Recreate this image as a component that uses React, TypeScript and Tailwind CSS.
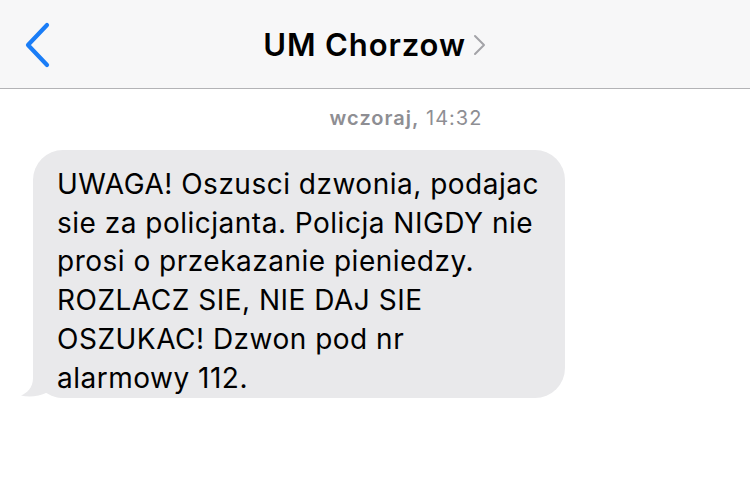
import React from "react";

export default function App() {
  const lines = [
    "UWAGA! Oszusci dzwonia, podajac",
    "sie za policjanta. Policja NIGDY nie",
    "prosi o przekazanie pieniedzy.",
    "ROZLACZ SIE, NIE DAJ SIE",
    "OSZUKAC! Dzwon pod nr",
    "alarmowy 112.",
  ];
  return (
    <div
      className="w-[750px] h-[490px] bg-white overflow-hidden"
      style={{ fontFamily: 'Inter, "Liberation Sans", Arial, sans-serif' }}
    >
      <div className="relative h-[89px] bg-[#f7f7f8] border-b border-[#b3b3b6] flex items-center justify-center">
        <svg
          className="absolute left-[22px] top-[22px]"
          width="32"
          height="46"
          viewBox="0 0 32 46"
        >
          <path
            d="M25 3 L6 23 L25 43"
            fill="none"
            stroke="#1a7df7"
            strokeWidth="4.2"
            strokeLinecap="round"
            strokeLinejoin="round"
          />
        </svg>
        <div className="flex items-center">
          <span className="text-[31px] font-semibold text-black tracking-[0.9px] leading-none">
            UM Chorzow
          </span>
          <svg className="ml-[7px] mt-[2px]" width="14" height="22" viewBox="0 0 14 22">
            <path
              d="M2 2 L11 11 L2 20"
              fill="none"
              stroke="#a3a3a8"
              strokeWidth="2"
              strokeLinecap="round"
              strokeLinejoin="round"
            />
          </svg>
        </div>
      </div>
      <div className="pt-[16px] flex justify-center pl-[62px]">
        <span className="text-[20px] text-[#8e8e93] leading-[26px] tracking-[1px]">
          <span className="font-semibold">wczoraj,</span> 14:32
        </span>
      </div>
      <div className="pl-[33px] pt-[19px]">
        <div className="relative w-[532px] h-[248px] bg-[#e9e9eb] rounded-[30px] pl-[24px] pt-[16px]">
          <svg
            className="absolute left-[-14px] bottom-0"
            width="50"
            height="40"
            viewBox="0 0 50 40"
          >
            <path
              d="M14 0 L14 20 C14 30 8 35 2 37.5 C10 39.5 20 38.5 28 34.5 C33 38 39 40 50 40 L50 0 Z"
              fill="#e9e9eb"
            />
          </svg>
          <div className="relative text-[28px] leading-[38.7px] text-black tracking-[0.5px] -mt-[1px]">
            {lines.map((l, i) => (
              <div key={i} className="whitespace-nowrap">
                {l}
              </div>
            ))}
          </div>
        </div>
      </div>
    </div>
  );
}
